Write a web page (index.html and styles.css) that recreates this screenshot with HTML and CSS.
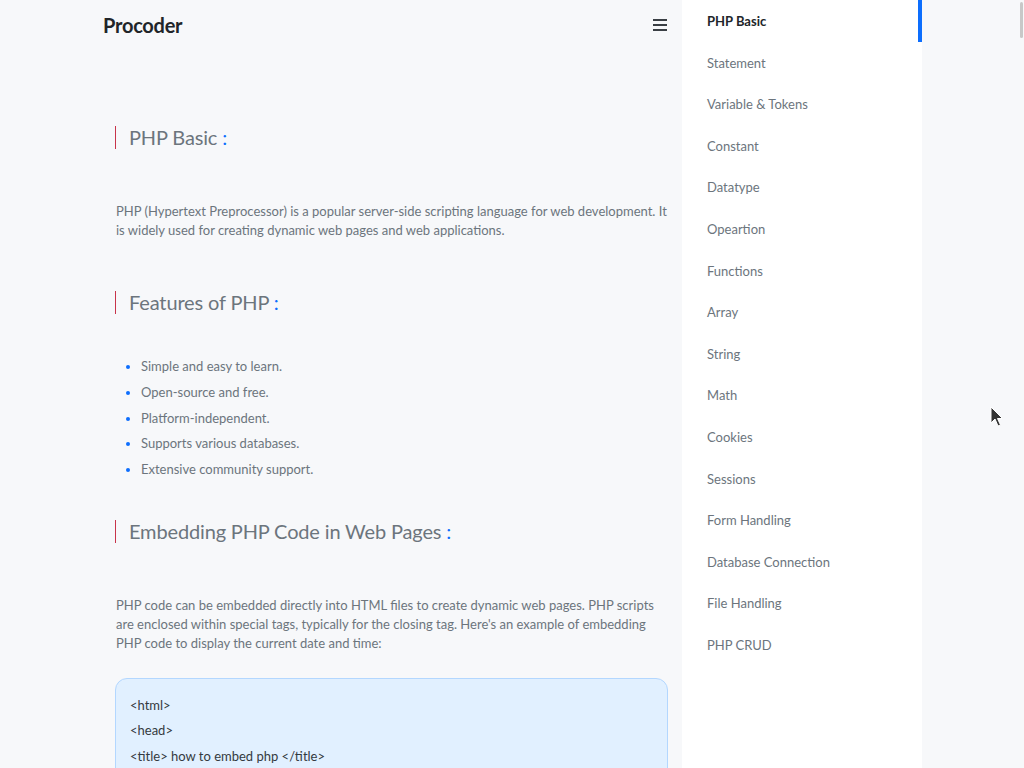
FILE: index.html
```html
<!DOCTYPE html>
<html lang="en">
<head>
<meta charset="utf-8">
<title>Procoder - PHP Basic</title>
<link rel="stylesheet" href="styles.css">
</head>
<body>
<div class="page">
  <main class="main">
    <header class="topbar">
      <div class="brand">Procoder</div>
      <button class="burger" aria-label="menu"><span></span><span></span><span></span></button>
    </header>
    <article class="article">
      <h2 class="heading">PHP Basic <span class="colon">:</span></h2>
      <p class="text">PHP (Hypertext Preprocessor) is a popular server-side scripting language for web development. It is widely used for creating dynamic web pages and web applications.</p>

      <h2 class="heading">Features of PHP <span class="colon">:</span></h2>
      <ul class="list">
        <li>Simple and easy to learn.</li>
        <li>Open-source and free.</li>
        <li>Platform-independent.</li>
        <li>Supports various databases.</li>
        <li>Extensive community support.</li>
      </ul>

      <h2 class="heading">Embedding PHP Code in Web Pages <span class="colon">:</span></h2>
      <p class="text last">PHP code can be embedded directly into HTML files to create dynamic web pages. PHP scripts are enclosed within special tags, typically for the closing tag. Here's an example of embedding PHP code to display the current date and time:</p>

      <div class="code">
        <div class="code-line">&lt;html&gt;</div>
        <div class="code-line">&lt;head&gt;</div>
        <div class="code-line">&lt;title&gt; how to embed php &lt;/title&gt;</div>
      </div>
    </article>
  </main>
  <nav class="sidebar">
    <a class="nav-item active" href="#">PHP Basic</a>
    <a class="nav-item" href="#">Statement</a>
    <a class="nav-item" href="#">Variable &amp; Tokens</a>
    <a class="nav-item" href="#">Constant</a>
    <a class="nav-item" href="#">Datatype</a>
    <a class="nav-item" href="#">Opeartion</a>
    <a class="nav-item" href="#">Functions</a>
    <a class="nav-item" href="#">Array</a>
    <a class="nav-item" href="#">String</a>
    <a class="nav-item" href="#">Math</a>
    <a class="nav-item" href="#">Cookies</a>
    <a class="nav-item" href="#">Sessions</a>
    <a class="nav-item" href="#">Form Handling</a>
    <a class="nav-item" href="#">Database Connection</a>
    <a class="nav-item" href="#">File Handling</a>
    <a class="nav-item" href="#">PHP CRUD</a>
  </nav>
  <div class="rest"></div>
</div>
<div class="scroll-thumb"></div>
<svg class="cursor" width="14" height="22" viewBox="0 0 14 22"><path d="M1 1 L1 17 L5 13 L8 20 L10.5 19 L7.5 12.5 L12.5 12.5 Z" fill="#333" stroke="#fff" stroke-width="1"/></svg>
</body>
</html>
```

FILE: styles.css
```css
* { box-sizing: border-box; }
html, body { margin: 0; padding: 0; height: 100%; overflow: hidden; }
body {
  font-family: "Lato", "Noto Sans", sans-serif;
  background: #f7f8fa;
  color: #6c757d;
}
.page {
  display: flex;
  height: 768px;
}
.main {
  width: 682px;
  flex: none;
  background: #f7f8fa;
}
.topbar {
  height: 50px;
  display: flex;
  align-items: center;
  justify-content: space-between;
  padding: 0 15px 0 103px;
}
.brand {
  font-size: 20px;
  font-weight: 700;
  color: #212529;
  letter-spacing: -0.25px;
}
.burger {
  border: 0;
  background: none;
  width: 14px;
  height: 14px;
  display: flex;
  flex-direction: column;
  justify-content: space-between;
  padding: 1px 0;
}
.burger span {
  display: block;
  height: 2px;
  background: #3a3f44;
}
.article {
  padding: 76px 14px 0 115px;
}
.heading {
  margin: 0;
  border-left: 1px solid #c8344a;
  padding-left: 13px;
  font-size: 20px;
  font-weight: 400;
  letter-spacing: -0.15px;
  line-height: 23px;
  color: #6c757d;
}
.colon { color: #0d6efd; }
.text {
  margin: 53px 0 51px 1px;
  font-size: 13px;
  line-height: 19px;
}
.text.last { margin-bottom: 25px; }
.list {
  margin: 40px 0 37px 0;
  padding-left: 26px;
  font-size: 13px;
  line-height: 25.75px;
}
.list li::marker { color: #0d6efd; }
.code {
  background: #e1f0ff;
  border: 1px solid #b3d7ff;
  border-radius: 12px;
  padding: 14px 14px 40px;
  color: #343a40;
  font-size: 13px;
  line-height: 25.5px;
}
.sidebar {
  width: 240px;
  flex: none;
  background: #fff;
  display: flex;
  flex-direction: column;
}
.nav-item {
  display: block;
  height: 41.6px;
  line-height: 41.6px;
  padding: 1px 25px 0;
  font-size: 13px;
  color: #6c757d;
  text-decoration: none;
  border-right: 4px solid transparent;
}
.nav-item.active {
  font-weight: 700;
  color: #212529;
  border-right-color: #0d6efd;
}
.rest { flex: 1; background: #f7f8fa; }
.scroll-thumb {
  position: fixed;
  right: 1px;
  top: 2px;
  width: 3px;
  height: 36px;
  border-radius: 2px;
  background: #c8c8c8;
}
.cursor {
  position: fixed;
  left: 990px;
  top: 406px;
}
```
